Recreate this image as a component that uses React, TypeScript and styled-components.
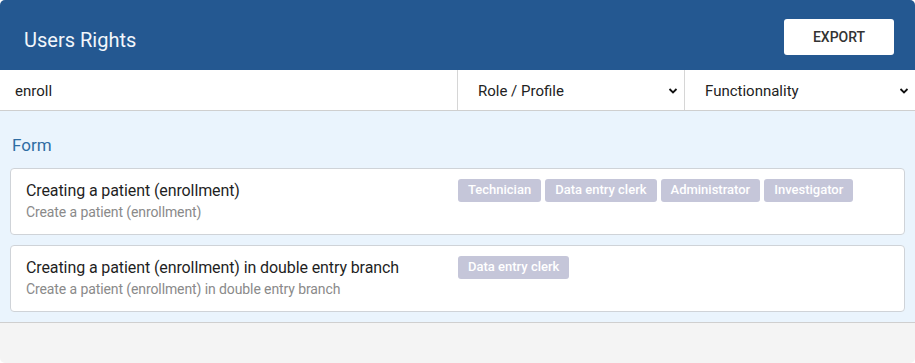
import React from 'react'
import styled, { createGlobalStyle } from 'styled-components'

const GlobalStyle = createGlobalStyle`
  html, body {
    margin: 0;
    padding: 0;
    background: #ffffff;
    font-family: Roboto, "Liberation Sans", Arial, sans-serif;
  }
`

const Panel = styled.div`
  width: 915px;
  height: 363px;
  display: flex;
  flex-direction: column;
  border-radius: 5px;
  overflow: hidden;
  background: #f4f4f4;
`

const Header = styled.div`
  height: 70px;
  box-sizing: border-box;
  background: #245891;
  display: flex;
  align-items: center;
  justify-content: space-between;
  padding: 0 21px 0 24px;
`

const Title = styled.h1`
  margin: 10px 0 0 0;
  font-size: 20px;
  font-weight: 400;
  color: #f2f6fb;
`

const ExportButton = styled.button`
  width: 110px;
  height: 36px;
  margin-top: 4px;
  background: #ffffff;
  border: none;
  border-radius: 3px;
  font-family: inherit;
  font-size: 14px;
  font-weight: 500;
  color: #333333;
  cursor: pointer;
`

const FilterBar = styled.div`
  height: 41px;
  box-sizing: border-box;
  display: grid;
  grid-template-columns: 458px 227px 1fr;
  background: #ffffff;
  border-bottom: 1px solid #cfcfcf;
`

const SearchInput = styled.input`
  border: none;
  border-right: 1px solid #d6d6d6;
  padding: 2px 15px 0 15px;
  font-family: inherit;
  font-size: 15px;
  color: #222;
  outline: none;
  background: transparent;
`

const SelectWrap = styled.div<{ $last?: boolean }>`
  position: relative;
  border-right: ${p => (p.$last ? 'none' : '1px solid #d6d6d6')};
  display: flex;
  align-items: center;
  padding: 2px 20px 0 20px;
  font-size: 15px;
  color: #222;
`

const Chevron = styled.svg`
  position: absolute;
  right: 6px;
  top: 16px;
`

const Content = styled.div`
  background: #eaf4fd;
  border-bottom: 1px solid #cfcfcf;
  padding: 24px 10px 10px 10px;
`

const SectionTitle = styled.div`
  font-size: 17px;
  color: #2f6da3;
  margin-left: 2px;
  margin-bottom: 13px;
`

const CardList = styled.div`
  display: flex;
  flex-direction: column;
  gap: 10px;
`

const Card = styled.div`
  height: 67px;
  box-sizing: border-box;
  background: #ffffff;
  border: 1px solid #cfd3d8;
  border-radius: 4px;
  display: grid;
  grid-template-columns: 432px 1fr;
  padding: 10px 15px 10px 15px;
`

const CardText = styled.div`
  display: flex;
  flex-direction: column;
  padding-top: 1px;
`

const CardTitle = styled.div`
  font-size: 16px;
  letter-spacing: -0.1px;
  color: #1f1f1f;
  margin-top: 1px;
`

const CardSub = styled.div`
  font-size: 14px;
  letter-spacing: -0.1px;
  color: #8a8a8a;
  margin-top: 4px;
`

const Tags = styled.div`
  display: flex;
  gap: 4px;
  align-items: flex-start;
`

const Tag = styled.span`
  background: #c5c6d9;
  color: #ffffff;
  font-size: 13px;
  font-weight: 500;
  padding: 0 10px;
  height: 23px;
  line-height: 22px;
  border-radius: 3px;
`

const ChevronIcon = () => (
  <Chevron width="10" height="10" viewBox="0 0 10 10">
    <path d="M1.5 3 L5 6.5 L8.5 3" fill="none" stroke="#111" strokeWidth="1.8" />
  </Chevron>
)

const rows = [
  {
    title: 'Creating a patient (enrollment)',
    sub: 'Create a patient (enrollment)',
    tags: ['Technician', 'Data entry clerk', 'Administrator', 'Investigator'],
  },
  {
    title: 'Creating a patient (enrollment) in double entry branch',
    sub: 'Create a patient (enrollment) in double entry branch',
    tags: ['Data entry clerk'],
  },
]

export default function App() {
  return (
    <>
      <GlobalStyle />
      <Panel>
        <Header>
          <Title>Users Rights</Title>
          <ExportButton>EXPORT</ExportButton>
        </Header>
        <FilterBar>
          <SearchInput defaultValue="enroll" />
          <SelectWrap>
            Role / Profile
            <ChevronIcon />
          </SelectWrap>
          <SelectWrap $last>
            Functionnality
            <ChevronIcon />
          </SelectWrap>
        </FilterBar>
        <Content>
          <SectionTitle>Form</SectionTitle>
          <CardList>
            {rows.map(r => (
              <Card key={r.title}>
                <CardText>
                  <CardTitle>{r.title}</CardTitle>
                  <CardSub>{r.sub}</CardSub>
                </CardText>
                <Tags>
                  {r.tags.map(t => (
                    <Tag key={t}>{t}</Tag>
                  ))}
                </Tags>
              </Card>
            ))}
          </CardList>
        </Content>
      </Panel>
    </>
  )
}
